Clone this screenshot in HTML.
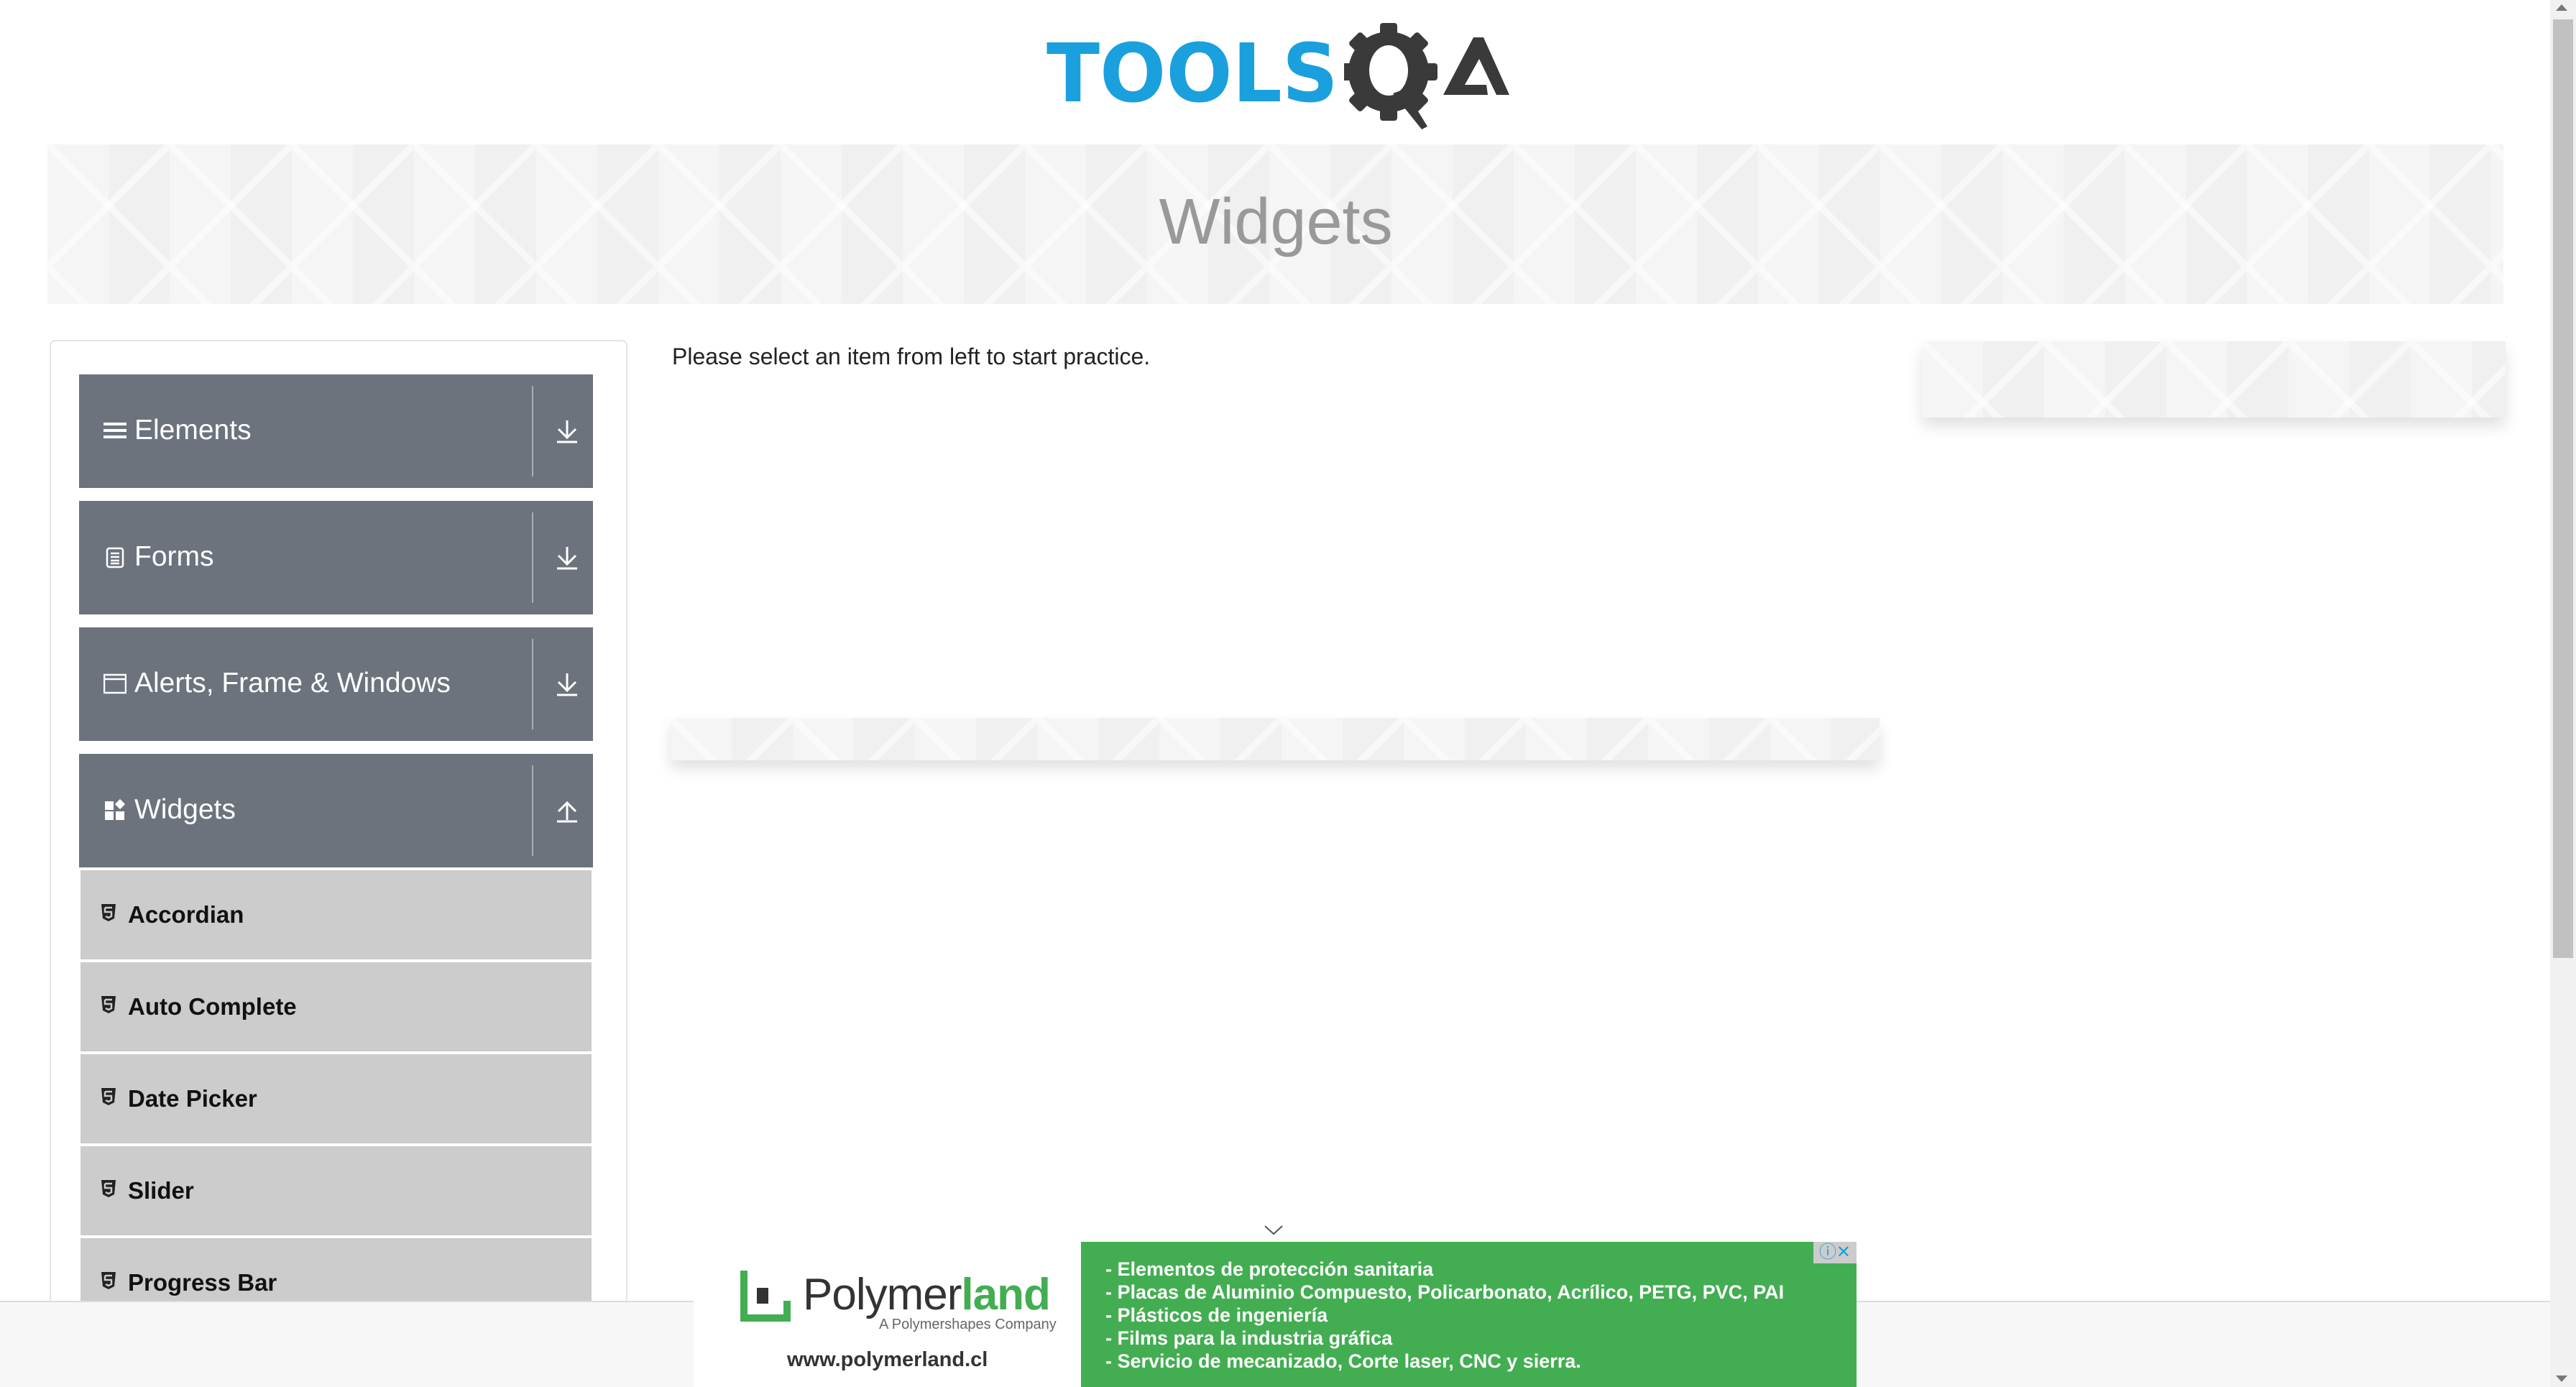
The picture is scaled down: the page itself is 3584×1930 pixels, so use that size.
<!DOCTYPE html>
<html style="overflow:hidden;height:1930px"><head><meta charset="utf-8"><style>
*{box-sizing:border-box;margin:0;padding:0}
body{width:3584px;height:1930px;overflow:hidden;background:#fff;font-family:"Liberation Sans",sans-serif;position:relative}
.pat{background-color:#f3f3f3;background-image:linear-gradient(45deg,transparent 48%,rgba(255,255,255,.55) 48%,rgba(255,255,255,.55) 52%,transparent 52%),linear-gradient(-45deg,transparent 48%,rgba(255,255,255,.55) 48%,rgba(255,255,255,.55) 52%,transparent 52%),linear-gradient(90deg,#f5f5f5 50%,#f0f0f0 50%);background-size:170px 170px,170px 170px,170px 170px}
.abs{position:absolute}
.grp{position:absolute;left:110px;width:715px;height:158px;background:#6c737d;color:#fff;font-size:39px}
.grp .t{position:absolute;left:77px;top:56px}
.grp .ic{position:absolute;left:34px;top:62px;width:32px;height:32px}
.grp .div{position:absolute;left:630px;top:16px;width:2px;height:126px;background:#a9aeb5}
.grp .ar{position:absolute;left:664px;top:62px}
.sub{position:absolute;left:112px;width:711px;height:124px;background:#ccc;font-size:33px;font-weight:bold;color:#111}
.sub span{position:absolute;left:66px;top:43px}
.sub svg{position:absolute;left:28px;top:46px}
</style></head><body>
<!-- logo -->
<div class="abs" style="left:1456px;top:32px;width:650px;height:150px">
<div class="abs" style="left:0;top:14px;font-size:118px;font-weight:bold;color:#1aa0dd;font-family:'DejaVu Sans',sans-serif;transform:scale(0.92,0.95);transform-origin:top left;line-height:1;white-space:nowrap">TOOLS</div>
<svg class="abs" style="left:414px;top:0" width="240" height="150" viewBox="0 0 240 150">
<g fill="#3a3a3a"><circle cx="62" cy="68" r="56"/><rect x="50" y="0" width="24" height="136" rx="4"/><rect x="-6" y="56" width="136" height="24" rx="4"/><rect x="50" y="0" width="24" height="136" rx="4" transform="rotate(45 62 68)"/><rect x="50" y="0" width="24" height="136" rx="4" transform="rotate(-45 62 68)"/></g>
<ellipse cx="62" cy="66" rx="27" ry="35" fill="#fff"/>
<polygon points="68,98 84,92 116,144 108,148" fill="#3a3a3a"/>
<polygon points="138,100 180,20 194,20 230,100 212,100 188,50 168,86 198,86 200,100" fill="#3a3a3a"/>
</svg></div>
<!-- banner -->
<div class="abs pat" style="left:66px;top:201px;width:3417px;height:222px"></div>
<div class="abs" style="left:0;top:258px;width:3550px;text-align:center;font-size:90px;color:#999">Widgets</div>
<!-- sidebar card -->
<div class="abs" style="left:69px;top:473px;width:804px;height:1400px;border:2px solid #e4e4e4;border-radius:8px"></div>
<div class="grp" style="top:521px"><svg class="ic" viewBox="0 0 32 32"><rect x="0" y="5" width="32" height="4" fill="#fff"/><rect x="0" y="14" width="32" height="4" fill="#fff"/><rect x="0" y="23" width="32" height="4" fill="#fff"/></svg><span class="t">Elements</span><div class="div"></div><svg class="ar" width="30" height="34" viewBox="0 0 30 34" fill="none" stroke="#fff" stroke-width="3"><path d="M15 2v24M3 14l12 12 12-12M1 32h28"/></svg></div>
<div class="grp" style="top:697px"><svg class="ic" viewBox="0 0 32 32" fill="none" stroke="#fff" stroke-width="2.5"><rect x="5" y="4" width="22" height="26" rx="3"/><path d="M10 11h12M10 16h12M10 21h12M10 25h12"/></svg><span class="t">Forms</span><div class="div"></div><svg class="ar" width="30" height="34" viewBox="0 0 30 34" fill="none" stroke="#fff" stroke-width="3"><path d="M15 2v24M3 14l12 12 12-12M1 32h28"/></svg></div>
<div class="grp" style="top:873px"><svg class="ic" viewBox="0 0 32 32" fill="none" stroke="#fff" stroke-width="2.5"><rect x="1" y="4" width="30" height="25"/><path d="M1 10h30"/></svg><span class="t">Alerts, Frame &amp; Windows</span><div class="div"></div><svg class="ar" width="30" height="34" viewBox="0 0 30 34" fill="none" stroke="#fff" stroke-width="3"><path d="M15 2v24M3 14l12 12 12-12M1 32h28"/></svg></div>
<div class="grp" style="top:1049px"><svg class="ic" viewBox="0 0 32 32" fill="#fff"><rect x="2" y="4" width="12" height="12"/><rect x="2" y="18" width="12" height="12"/><rect x="17" y="18" width="12" height="12"/><rect x="18" y="3" width="10" height="10" transform="rotate(45 23 8)"/></svg><span class="t">Widgets</span><div class="div"></div><svg class="ar" width="30" height="34" viewBox="0 0 30 34" fill="none" stroke="#fff" stroke-width="3"><path d="M15 30V6M3 18L15 6l12 12M1 32h28"/></svg></div>
<div class="sub" style="top:1211px"><svg width="22" height="26" viewBox="0 0 22 26"><path d="M1 1h20l-2 20-8 4-8-4z" fill="#222"/><path d="M6 6h10M6 6v6h9v6l-4 2-4-2" fill="none" stroke="#ccc" stroke-width="2.5"/></svg><span>Accordian</span></div>
<div class="sub" style="top:1339px"><svg width="22" height="26" viewBox="0 0 22 26"><path d="M1 1h20l-2 20-8 4-8-4z" fill="#222"/><path d="M6 6h10M6 6v6h9v6l-4 2-4-2" fill="none" stroke="#ccc" stroke-width="2.5"/></svg><span>Auto Complete</span></div>
<div class="sub" style="top:1467px"><svg width="22" height="26" viewBox="0 0 22 26"><path d="M1 1h20l-2 20-8 4-8-4z" fill="#222"/><path d="M6 6h10M6 6v6h9v6l-4 2-4-2" fill="none" stroke="#ccc" stroke-width="2.5"/></svg><span>Date Picker</span></div>
<div class="sub" style="top:1595px"><svg width="22" height="26" viewBox="0 0 22 26"><path d="M1 1h20l-2 20-8 4-8-4z" fill="#222"/><path d="M6 6h10M6 6v6h9v6l-4 2-4-2" fill="none" stroke="#ccc" stroke-width="2.5"/></svg><span>Slider</span></div>
<div class="sub" style="top:1723px"><svg width="22" height="26" viewBox="0 0 22 26"><path d="M1 1h20l-2 20-8 4-8-4z" fill="#222"/><path d="M6 6h10M6 6v6h9v6l-4 2-4-2" fill="none" stroke="#ccc" stroke-width="2.5"/></svg><span>Progress Bar</span></div>
<!-- main -->
<div class="abs" style="left:935px;top:478px;font-size:32px;color:#222">Please select an item from left to start practice.</div>
<div class="abs pat" style="left:2674px;top:475px;width:812px;height:106px;box-shadow:0 12px 20px rgba(0,0,0,.12)"></div>
<div class="abs pat" style="left:933px;top:999px;width:1682px;height:59px;box-shadow:0 12px 20px rgba(0,0,0,.12)"></div>
<!-- footer -->
<div class="abs" style="left:0;top:1810px;width:3548px;height:120px;background:#f7f7f7;border-top:2px solid #ddd;z-index:5"></div>
<svg class="abs" style="left:1758px;top:1704px;z-index:6" width="28" height="16" viewBox="0 0 28 16" fill="none" stroke="#555" stroke-width="2"><path d="M2 2l12 11L26 2"/></svg>
<div class="abs" style="left:965px;top:1728px;width:539px;height:202px;background:#fff;z-index:6">
<svg class="abs" style="left:60px;top:34px" width="80" height="80" viewBox="0 0 80 80"><path d="M10 6v66h60V48" fill="none" stroke="#43ad52" stroke-width="10"/><rect x="28" y="30" width="16" height="22" fill="#333"/></svg>
<div class="abs" style="left:152px;top:38px;font-size:62px;color:#333;letter-spacing:-1px">Polymer<span style="color:#43ad52;font-weight:bold">land</span></div>
<div class="abs" style="left:258px;top:104px;font-size:20px;color:#666">A Polymershapes Company</div>
<div class="abs" style="left:130px;top:148px;font-size:29px;font-weight:bold;color:#333">www.polymerland.cl</div>
</div>
<div class="abs" style="left:1504px;top:1728px;width:1079px;height:202px;background:#43ad52;color:#fff;font-weight:bold;font-size:27px;line-height:32px;padding:22px 0 0 34px;z-index:6;white-space:nowrap;overflow:hidden">
- Elementos de protección sanitaria<br>- Placas de Aluminio Compuesto, Policarbonato, Acrílico, PETG, PVC, PAI<br>- Plásticos de ingeniería<br>- Films para la industria gráfica<br>- Servicio de mecanizado, Corte laser, CNC y sierra.
<div class="abs" style="right:0;top:0;width:60px;height:30px;background:#ccc;color:#1aa0dd;font-size:24px;line-height:30px;text-align:center;font-weight:normal">ⓘ✕</div>
</div>
<!-- scrollbar -->
<div class="abs" style="left:3548px;top:0;width:36px;height:1930px;background:#f1f1f1;z-index:7"></div>
<div class="abs" style="left:3552px;top:27px;width:28px;height:1306px;background:#c1c1c1;z-index:8"></div>
<div class="abs" style="left:3556px;top:6px;width:0;height:0;border-left:8px solid transparent;border-right:8px solid transparent;border-bottom:9px solid #777;z-index:8"></div>
<div class="abs" style="left:3556px;top:1914px;width:0;height:0;border-left:8px solid transparent;border-right:8px solid transparent;border-top:9px solid #777;z-index:8"></div>
</body></html>
